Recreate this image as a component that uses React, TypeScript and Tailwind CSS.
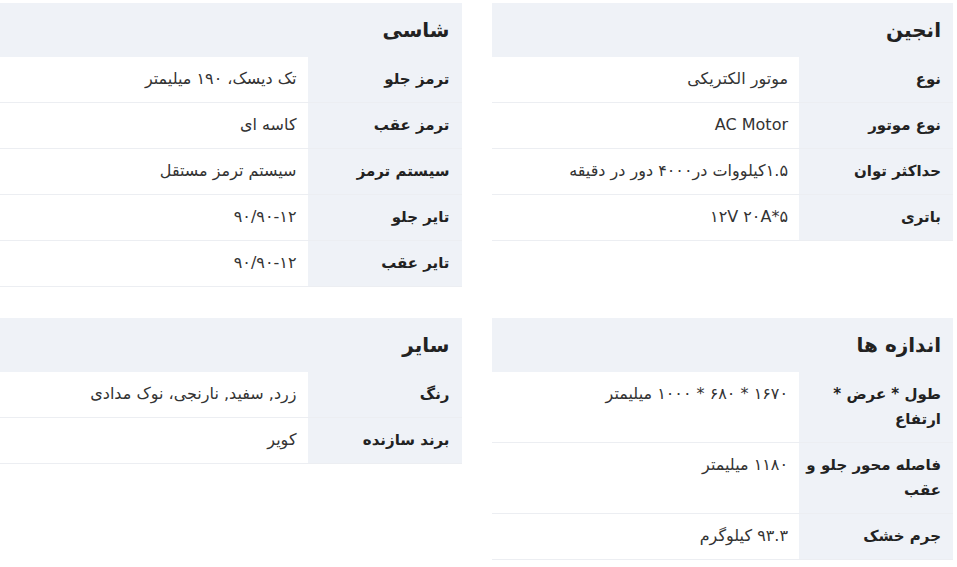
const SECTIONS: { title: string; rows: [string, string][] }[] = [
  {
    title: 'انجین',
    rows: [
      ['نوع', 'موتور الکتریکی'],
      ['نوع موتور', 'AC Motor'],
      ['حداکثر توان', '۱.۵کیلووات در۴۰۰۰ دور در دقیقه'],
      ['باتری', '۱۲V ۲۰A*۵'],
    ],
  },
  {
    title: 'شاسی',
    rows: [
      ['ترمز جلو', 'تک دیسک، ۱۹۰ میلیمتر'],
      ['ترمز عقب', 'کاسه ای'],
      ['سیستم ترمز', 'سیستم ترمز مستقل'],
      ['تایر جلو', '۹۰/۹۰-۱۲'],
      ['تایر عقب', '۹۰/۹۰-۱۲'],
    ],
  },
  {
    title: 'اندازه ها',
    rows: [
      ['طول * عرض *\nارتفاع', '۱۶۷۰ * ۶۸۰ * ۱۰۰۰ میلیمتر'],
      ['فاصله محور جلو و\nعقب', '۱۱۸۰ میلیمتر'],
      ['جرم خشک', '۹۳.۳ کیلوگرم'],
    ],
  },
  {
    title: 'سایر',
    rows: [
      ['رنگ', 'زرد, سفید, نارنجی، نوک مدادی'],
      ['برند سازنده', 'کویر'],
    ],
  },
];

function SpecTable({ title, rows }: { title: string; rows: [string, string][] }) {
  return (
    <div>
      <div className="h-[54px] bg-[#eff2f7] px-3 flex items-center text-[20px] font-bold text-[#222]">
        {title}
      </div>
      <table className="w-full border-collapse">
        <tbody>
          {rows.map(([label, value]) => (
            <tr key={label} className="border-b border-[#eceef2]">
              <td className="w-[154px] bg-[#eff2f7] pl-1 pr-3 py-[10px] align-top text-[15px] leading-[25px] font-bold text-[#222] whitespace-pre">
                {label}
              </td>
              <td className="px-[11px] py-[10px] align-top text-[16px] leading-[24px] text-[#333]">
                {value}
              </td>
            </tr>
          ))}
        </tbody>
      </table>
    </div>
  );
}

export default function App() {
  return (
    <div
      dir="rtl"
      className="min-h-screen bg-white pt-[3px] pr-[4px] grid grid-cols-2 gap-x-[30px] gap-y-[31px] content-start"
      style={{ fontFamily: '"DejaVu Sans", sans-serif' }}
    >
      {SECTIONS.map((s) => (
        <SpecTable key={s.title} title={s.title} rows={s.rows} />
      ))}
    </div>
  );
}
